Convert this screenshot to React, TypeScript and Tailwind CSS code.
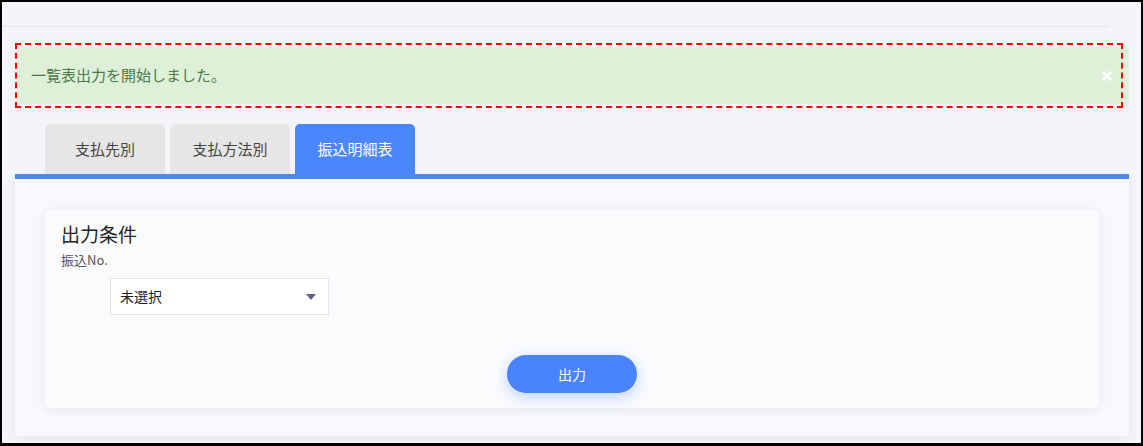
import React from 'react'

const font = { fontFamily: '"Noto Sans CJK JP", "Noto Sans", sans-serif' }

const tabs = ['支払先別', '支払方法別', '振込明細表']

export default function App() {
  const active = 2

  return (
    <div
      className="h-[446px] w-[1143px] overflow-hidden border-l-2 border-t-2 border-r-2 border-b-[3px] border-black bg-[#f4f5f9]"
      style={font}
    >
      {/* ヘッダー下線 */}
      <div className="h-[25px] w-[1107px] border-b border-[#e3e5eb]" />

      <div className="w-[1127px] pl-[13px]">
        {/* 通知 */}
        <div className="relative mt-[20px] ml-[2px]">
          <div className="flex h-[57px] items-center justify-between rounded-[4px] bg-[#dff0d8] pl-[14px] pr-[17px]">
            <span className="text-[15px] text-[#4a7a48]">一覧表出力を開始しました。</span>
            <svg width="10" height="10" viewBox="0 0 10 10">
              <path d="M1.5 1.5 L8.5 8.5 M8.5 1.5 L1.5 8.5" stroke="#fff" strokeWidth="2.6" strokeLinecap="round" />
            </svg>
          </div>
          <div className="pointer-events-none absolute left-[-2px] top-[-4px] h-[65px] w-[1108px] border-2 border-dashed border-[#ff0000]" />
        </div>

        {/* タブ */}
        <div className="mt-[20px] flex gap-[5px] pl-[30px]">
          {tabs.map((t, i) => (
            <div
              key={t}
              className={
                i === active
                  ? 'flex h-[50px] w-[120px] items-center justify-center rounded-t-[5px] bg-[#4c86fd] text-[15px] text-white'
                  : 'flex h-[50px] w-[120px] items-center justify-center rounded-t-[5px] bg-[#e6e6e6] text-[15px] text-[#444]'
              }
            >
              {t}
            </div>
          ))}
        </div>

        {/* パネル */}
        <div className="border-t-[5px] border-[#4f87fb] bg-[#f7f8fb] px-[30px] pt-[31px] pb-[28px] shadow-[0_2px_8px_rgba(120,130,170,0.12)]">
          <div className="h-[198px] rounded-[5px] bg-[#fafbfd] px-[16px] pt-[10px] shadow-[0_2px_10px_rgba(120,130,170,0.12)]">
            <h2 className="text-[19px] leading-[28px] text-[#222]">出力条件</h2>
            <p className="mt-[3px] text-[13px] leading-[18px] text-[#555]">振込No.</p>
            <div className="mt-[9px] ml-[49px] flex h-[37px] w-[219px] items-center justify-between border border-[#e4e5ea] bg-white pl-[9px] pr-[12px]">
              <span className="text-[14px] text-[#222]">未選択</span>
              <svg width="10" height="6" viewBox="0 0 10 6">
                <path d="M0 0 L10 0 L5 6 Z" fill="#5c6190" />
              </svg>
            </div>
            <div className="mt-[40px] flex justify-center">
              <button className="h-[38px] w-[130px] rounded-full bg-[#4a84fc] text-[14px] text-white shadow-[0_4px_14px_rgba(74,132,252,0.35)]">
                出力
              </button>
            </div>
          </div>
        </div>
      </div>
    </div>
  )
}
